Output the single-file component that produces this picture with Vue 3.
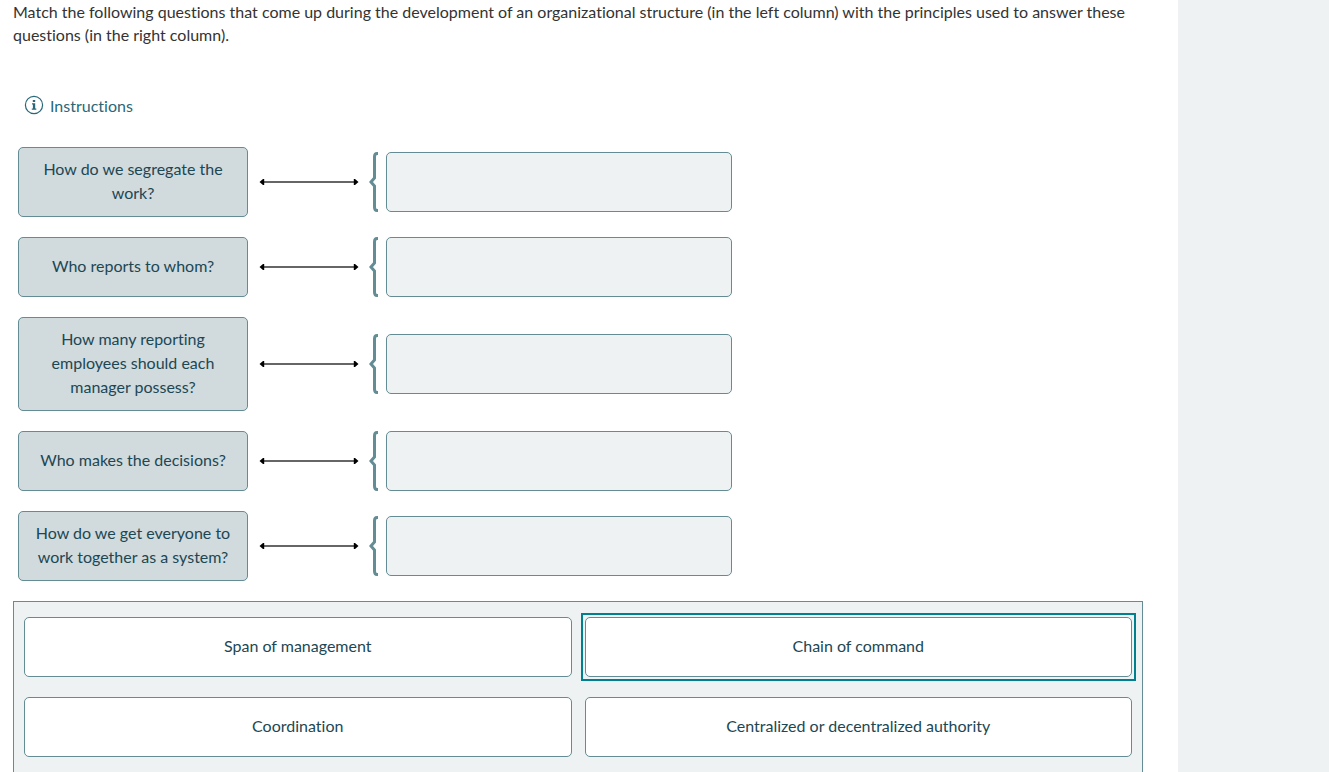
<script setup>
import { ref } from 'vue'

const prompts = [
  'How do we segregate the work?',
  'Who reports to whom?',
  'How many reporting employees should each manager possess?',
  'Who makes the decisions?',
  'How do we get everyone to work together as a system?',
]

const choices = [
  'Span of management',
  'Chain of command',
  'Coordination',
  'Centralized or decentralized authority',
]

const selected = ref(1)
</script>

<template>
  <div class="page">
    <main class="content">
      <p class="question">
        Match the following questions that come up during the development of an organizational
        structure (in the left column) with the principles used to answer these questions (in the
        right column).
      </p>

      <button class="instructions" type="button">
        <svg class="info" viewBox="0 0 20 20" aria-hidden="true">
          <circle cx="10" cy="10" r="8.6" fill="none" stroke="currentColor" stroke-width="1.2" />
          <rect x="8.8" y="5" width="2.4" height="2" fill="currentColor" />
          <path d="M8 8.2h3.2v5.2h1.1v1.4H7.8v-1.4h1.1V9.6H8z" fill="currentColor" />
        </svg>
        <span>Instructions</span>
      </button>

      <ul class="rows">
        <li v-for="prompt in prompts" :key="prompt" class="row">
          <div class="prompt">{{ prompt }}</div>
          <svg class="arrow" viewBox="0 0 100 8" aria-hidden="true">
            <path d="M4 4h92" stroke="#333" stroke-width="1.6" />
            <path d="M0.5 4L4 1h1.2v6H4zM99.5 4L96 1h-1.2v6H96z" fill="#000" />
          </svg>
          <svg class="brace" viewBox="0 0 10 60" aria-hidden="true">
            <path
              d="M9 1.5H8Q5.5 1.5 5.5 5V26L2 30L5.5 34V55Q5.5 58.5 8 58.5H9"
              fill="none"
              stroke="#638c94"
              stroke-width="3"
            />
          </svg>
          <div class="slot"></div>
        </li>
      </ul>

      <ul class="bank">
        <li
          v-for="(choice, i) in choices"
          :key="choice"
          class="option"
          :class="{ selected: selected === i }"
        >
          <button type="button" class="choice" @click="selected = i">{{ choice }}</button>
        </li>
      </ul>
    </main>
    <aside class="side"></aside>
  </div>
</template>

<style>
body {
  margin: 0;
}
</style>

<style scoped>
.page {
  display: grid;
  grid-template-columns: 1fr 151px;
  height: 100vh;
  overflow: hidden;
  background: #fff;
  font-family: Lato, "Open Sans", sans-serif;
  font-size: 16px;
  font-variant-ligatures: none;
  line-height: 24px;
  color: #1c4753;
}
.content {
  display: flex;
  flex-direction: column;
  min-height: 0;
  padding: 0 35px 0 13px;
}
.side {
  background: #eef2f3;
}
.question {
  margin: 0;
  line-height: 23px;
  color: #333;
}
.instructions {
  display: flex;
  align-items: center;
  align-self: flex-start;
  gap: 6px;
  margin: 48px 0 0 11px;
  padding: 0;
  border: 0;
  background: none;
  font: inherit;
  font-variant-ligatures: none;
  color: #2a6779;
  cursor: pointer;
}
.info {
  width: 20px;
  height: 20px;
  margin-bottom: 2px;
}
.rows {
  display: flex;
  flex-direction: column;
  gap: 20px;
  margin: 29px 0 20px 5px;
  padding: 0;
  list-style: none;
}
.row {
  display: flex;
  align-items: center;
}
.prompt {
  display: flex;
  align-items: center;
  justify-content: center;
  box-sizing: border-box;
  width: 230px;
  min-height: 60px;
  padding: 9px 15px 11px;
  border: 1px solid #638c94;
  border-radius: 5px;
  background: #d1dadd;
  text-align: center;
}
.arrow {
  width: 100px;
  height: 8px;
  margin-left: 11px;
}
.brace {
  width: 10px;
  height: 60px;
  margin: 0 7px 0 10px;
}
.slot {
  box-sizing: border-box;
  width: 346px;
  height: 60px;
  border: 1px solid #638c94;
  border-radius: 5px;
  background: #eef2f3;
}
.bank {
  display: grid;
  flex: 1;
  grid-template-columns: 1fr 1fr;
  align-content: start;
  gap: 20px 13px;
  margin: 0;
  padding: 15px 10px;
  border: 1px solid #638c94;
  border-bottom: 0;
  background: #eef2f3;
  list-style: none;
}
.option {
  display: flex;
}
.choice {
  flex: 1;
  min-height: 60px;
  padding: 9px 15px 11px;
  border: 1px solid #638c94;
  border-radius: 5px;
  background: #fff;
  font: inherit;
  font-variant-ligatures: none;
  color: inherit;
  cursor: pointer;
}
.selected {
  outline: 2px solid #007f8f;
  outline-offset: 2px;
}
</style>
